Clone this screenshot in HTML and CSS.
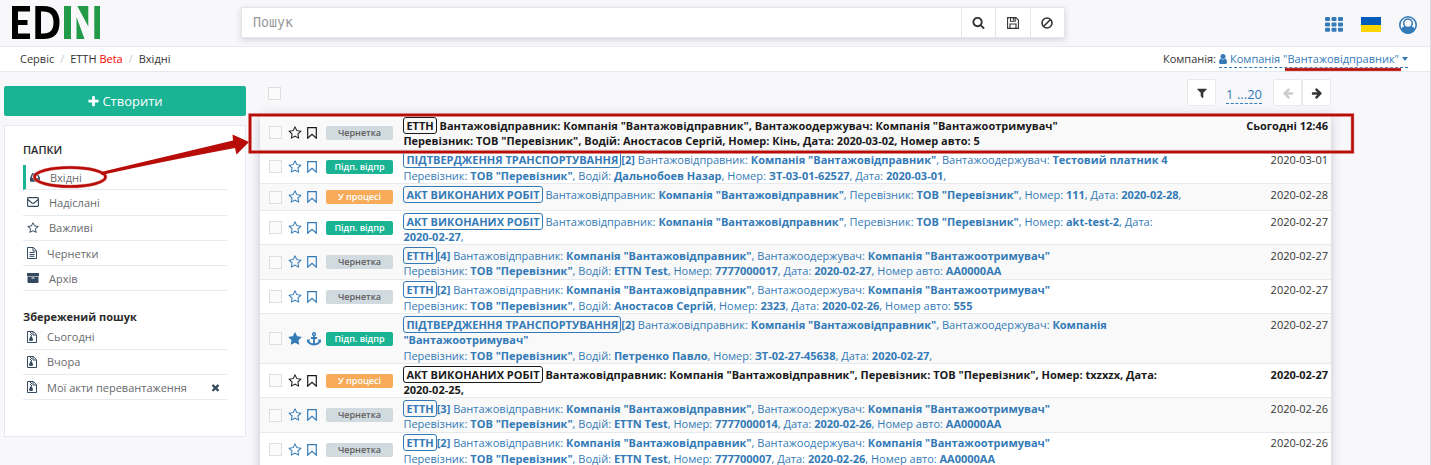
FILE: index.html
```html
<!DOCTYPE html>
<html lang="uk">
<head>
<meta charset="utf-8">
<title>EDIN</title>
<link rel="stylesheet" href="styles.css">
</head>
<body>
<svg class="defs" aria-hidden="true">
  <symbol id="search" viewBox="0 0 1792 1792"><path d="M1216 832q0-185-131.5-316.5t-316.5-131.5-316.5 131.5-131.5 316.5 131.5 316.5 316.5 131.5 316.5-131.5 131.5-316.5zm512 832q0 52-38 90t-90 38q-54 0-90-38l-343-342q-179 124-399 124-143 0-273.5-55.5t-225-150-150-225-55.5-273.5 55.5-273.5 150-225 225-150 273.5-55.5 273.5 55.5 225 150 150 225 55.5 273.5q0 220-124 399l343 343q37 37 37 90z"/></symbol>
  <symbol id="plus" viewBox="0 0 1792 1792"><path d="M1600 736v192q0 40-28 68t-68 28h-416v416q0 40-28 68t-68 28h-192q-40 0-68-28t-28-68v-416h-416q-40 0-68-28t-28-68v-192q0-40 28-68t68-28h416v-416q0-40 28-68t68-28h192q40 0 68 28t28 68v416h416q40 0 68 28t28 68z"/></symbol>
  <symbol id="filter" viewBox="0 0 1792 1792"><path d="M1595 295q17 41-14 70l-493 493v742q0 42-39 59-13 5-25 5-27 0-45-19l-256-256q-19-19-19-45v-486l-493-493q-31-29-14-70 17-39 59-39h1280q42 0 59 39z"/></symbol>
  <symbol id="star" viewBox="0 0 1792 1792"><path d="M1728 647q0 22-26 48l-363 354 86 500q1 7 1 20 0 21-10.500 35.500t-30.500 14.500q-19 0-40-12l-449-236-449 236q-22 12-40 12-21 0-31.500-14.500t-10.500-35.500q0-6 2-20l86-500-364-354q-25-27-25-48 0-37 56-46l502-73 225-455q19-41 49-41t49 41l225 455 502 73q56 9 56 46z"/></symbol>
  <symbol id="star-o" viewBox="0 0 1792 1792"><path d="M1201 1004l306-297-422-62-189-382-189 382-422 62 306 297-73 421 378-199 377 199zm527-357q0 22-26 48l-363 354 86 500q1 7 1 20 0 50-41 50-19 0-40-12l-449-236-449 236q-22 12-40 12-21 0-31.500-14.500t-10.500-35.500q0-6 2-20l86-500-364-354q-25-27-25-48 0-37 56-46l502-73 225-455q19-41 49-41t49 41l225 455 502 73q56 9 56 46z"/></symbol>
  <symbol id="times" viewBox="0 0 1792 1792"><path d="M1490 1322q0 40-28 68l-136 136q-28 28-68 28t-68-28l-294-294-294 294q-28 28-68 28t-68-28l-136-136q-28-28-28-68t28-68l294-294-294-294q-28-28-28-68t28-68l136-136q28-28 68-28t68 28l294 294 294-294q28-28 68-28t68 28l136 136q28 28 28 68t-28 68l-294 294 294 294q28 28 28 68z"/></symbol>
  <symbol id="arrow" viewBox="0 0 1792 1792"><path d="M1600 960q0 54-37 91l-651 651q-39 37-91 37-51 0-90-37l-75-75q-38-38-38-91t38-91l293-293h-704q-52 0-84.500-37.500t-32.500-90.500v-128q0-53 32.500-90.500t84.500-37.500h704l-293-294q-38-36-38-90t38-90l75-75q38-38 90-38 53 0 91 38l651 651q37 35 37 90z"/></symbol>
  <symbol id="bookmark" viewBox="0 0 10 12"><path d="M.7.600h8.600v10.600L5 7.400.7 11.200z" fill="none" stroke="currentColor" stroke-width="1.200"/></symbol>
  <symbol id="anchor" viewBox="0 0 14 14"><path d="M7 3.500v9M4 6h6M1.200 8.500Q2 12.300 7 12.500 12 12.300 12.800 8.500" fill="none" stroke="currentColor" stroke-width="1.800"/><circle cx="7" cy="2.200" r="1.400" fill="none" stroke="currentColor" stroke-width="1.400"/><path d="M0 7.500h3.300L.2 11zM14 7.500h-3.300l3.100 3.500z"/></symbol>
  <symbol id="save" viewBox="0 0 12 12"><path d="M.6.600h8.300l2.500 2.500v8.300H.600zM3 11V7h6v4M3.500.8v3.400h4.700V.8M6.500 1v2.300" fill="none" stroke="currentColor" stroke-width="1.100"/></symbol>
  <symbol id="ban" viewBox="0 0 12 12"><g fill="none" stroke="currentColor" stroke-width="1.600"><circle cx="6" cy="6" r="5"/><path d="M9.500 2.500l-7 7"/></g></symbol>
  <symbol id="grid" viewBox="0 0 18 15"><path d="M0 1q0-1 1-1h3q1 0 1 1v2q0 1-1 1H1Q0 4 0 3zm6.500 0q0-1 1-1h3q1 0 1 1v2q0 1-1 1h-3q-1 0-1-1zm6.500 0q0-1 1-1h3q1 0 1 1v2q0 1-1 1h-3q-1 0-1-1zM0 6.400q0-1 1-1h3q1 0 1 1v2q0 1-1 1H1q-1 0-1-1zm6.500 0q0-1 1-1h3q1 0 1 1v2q0 1-1 1h-3q-1 0-1-1zm6.500 0q0-1 1-1h3q1 0 1 1v2q0 1-1 1h-3q-1 0-1-1zM0 11.800q0-1 1-1h3q1 0 1 1v2q0 1-1 1H1q-1 0-1-1zm6.500 0q0-1 1-1h3q1 0 1 1v2q0 1-1 1h-3q-1 0-1-1zm6.500 0q0-1 1-1h3q1 0 1 1v2q0 1-1 1h-3q-1 0-1-1z"/></symbol>
  <symbol id="account" viewBox="0 0 18 18"><circle cx="9" cy="9" r="8.200" fill="none" stroke="currentColor" stroke-width="1.600"/><path d="M1.800 13.500Q3 10.800 5.800 10.300 7.200 11.600 9 11.600t3.200-1.300q2.800.5 4 3.200Q13.500 17.700 9 17.700t-7.200-4.200z"/><circle cx="9" cy="7.300" r="5"/><circle cx="9" cy="7.300" r="3.500" fill="#f8f8fb"/></symbol>
  <symbol id="user" viewBox="0 0 8 10"><circle cx="4" cy="2.600" r="2.500"/><path d="M1.700 4.500Q4 6.500 6.300 4.500 8 5 8 8.300 8 10 6.500 10h-5Q0 10 0 8.300 0 5 1.700 4.500z"/></symbol>
  <symbol id="inbox" viewBox="0 0 12 10"><path d="M2.500 0h7L12 5.500V9q0 1-1 1H1Q0 10 0 9V5.500zM3.600 1.500L2 5.500h2l.8 1.500h2.400L8 5.500h2L8.400 1.500z" fill-rule="evenodd"/></symbol>
  <symbol id="mail" viewBox="0 0 12 10"><path d="M.6 1.500q0-.9.9-.9h9q.9 0 .9.900v7q0 .9-.9.900h-9q-.9 0-.9-.9zM.8 2.500L5 6q1 .7 2 0l4.200-3.500" fill="none" stroke="currentColor" stroke-width="1.100"/></symbol>
  <symbol id="file" viewBox="0 0 10 12"><path d="M.5.500h5.800l3.200 3.200v7.800h-9zM6 .8V4h3.300M2.500 5.500h5M2.500 7.500h5M2.500 9.300h5" fill="none" stroke="currentColor"/></symbol>
  <symbol id="archive" viewBox="0 0 12 10"><path d="M.5 0h11q.5 0 .5.500v2q0 .5-.5.500H.5Q0 3 0 2.500v-2Q0 0 .5 0zM.5 3.600h11v5.600q0 .8-.8.800H1.300q-.8 0-.8-.8zM4.500 4.500v.9h3v-.9z" fill-rule="evenodd"/></symbol>
  <symbol id="zip" viewBox="0 0 10 12"><path d="M.5.500h5.800l3.200 3.200v7.800h-9zM6 .8V4h3.300" fill="none" stroke="currentColor"/><path d="M3 1h1v1H3zM4 2h1v1H4zM3 3h1v1H3zM4 4h1v1H4zM3.300 5.200h1.500l1.300 3.600Q6.100 10 4 10T2 8.800z"/></symbol>
</svg>

<header class="top">
  <svg class="logo" viewBox="0 0 88 33" role="img" aria-label="EDIN"><path d="M0 0h18v5.500H6V14h9.500v5H6v8.500h12V33H0zM23.300 0h8.200q16 0 16 16.500T31.500 33h-8.200zM29 5.500v22h2.500q10 0 10-11t-10-11z" fill-rule="evenodd"/><path class="green" d="M52 0h7v33h-7zM64.500 11L72.500 33h-8zM65.300 0h11v20.500zM82.300 0h5.700v33h-5.700z"/></svg>
  <div class="searchbar">
    <span class="query">Пошук</span>
    <span class="sbtn"><svg width="13" height="13"><use href="#search"/></svg></span>
    <span class="sbtn"><svg width="12" height="12"><use href="#save"/></svg></span>
    <span class="sbtn"><svg width="12" height="12"><use href="#ban"/></svg></span>
  </div>
  <div class="tools">
    <svg width="18" height="15"><use href="#grid"/></svg>
    <span class="flag"></span>
    <svg width="18" height="18"><use href="#account"/></svg>
  </div>
</header>

<nav class="crumbs">
  <div class="path"><span>Сервіс</span><i>/</i><span>ЕТТН <em>Beta</em></span><i>/</i><span>Вхідні</span></div>
  <div class="company">Компанія: <span class="pick"><svg width="8" height="10"><use href="#user"/></svg> Компанія "Вантажовідправник" <b class="caret"></b></span></div>
</nav>

<div class="body">
  <aside class="side">
    <div class="create"><svg width="13" height="13"><use href="#plus"/></svg>Створити</div>
    <div class="panel">
      <h5 class="light">ПАПКИ</h5>
      <ul>
        <li class="active"><svg width="10" height="9"><use href="#inbox"/></svg><span>Вхідні</span></li>
        <li><svg width="12" height="10"><use href="#mail"/></svg><span>Надіслані</span></li>
        <li><svg width="12" height="12"><use href="#star-o"/></svg><span>Важливі</span></li>
        <li><svg width="10" height="12"><use href="#file"/></svg><span>Чернетки</span></li>
        <li><svg width="12" height="10"><use href="#archive"/></svg><span>Архів</span></li>
      </ul>
      <h5 class="saved">Збережений пошук</h5>
      <ul>
        <li><svg width="10" height="12"><use href="#zip"/></svg><span>Сьогодні</span></li>
        <li><svg width="10" height="12"><use href="#zip"/></svg><span>Вчора</span></li>
        <li><svg width="10" height="12"><use href="#zip"/></svg><span>Мої акти перевантаження</span><svg class="remove" width="11" height="11"><use href="#times"/></svg></li>
      </ul>
    </div>
  </aside>

  <main class="main">
    <div class="bar">
      <span class="check"></span>
      <span class="btn filter"><svg width="12" height="12"><use href="#filter"/></svg></span>
      <span class="range">1 ...20</span>
      <span class="pager"><span class="btn off"><svg class="flip" width="12" height="12"><use href="#arrow"/></svg></span><span class="btn"><svg width="12" height="12"><use href="#arrow"/></svg></span></span>
    </div>
    <div class="list">
      <div class="row h34 unread raised">
        <span class="check"></span><svg class="st"><use href="#star-o"/></svg><svg class="bm"><use href="#bookmark"/></svg><span class="badge gray">Чернетка</span>
        <div class="text"><p><u>ЕТТН</u> Вантажовідправник: Компанія "Вантажовідправник", Вантажоодержувач: Компанія "Вантажоотримувач"</p><p>Перевізник: ТОВ "Перевізник", Водій: Аностасов Сергій, Номер: Кінь, Дата: 2020-03-02, Номер авто: 5</p></div><time>Сьогодні 12:46</time>
      </div>
      <div class="row h34 raised loose">
        <span class="check"></span><svg class="st"><use href="#star-o"/></svg><svg class="bm"><use href="#bookmark"/></svg><span class="badge teal">Підп. відпр</span>
        <div class="text"><p><u>ПІДТВЕРДЖЕННЯ ТРАНСПОРТУВАННЯ</u><b>[2]</b> Вантажовідправник: <b>Компанія "Вантажовідправник"</b>, Вантажоодержувач: <b>Тестовий платник 4</b></p><p>Перевізник: <b>ТОВ "Перевізник"</b>, Водій: <b>Дальнобоев Назар</b>, Номер: <b>ЗТ-03-01-62527</b>, Дата: <b>2020-03-01</b>,</p></div><time>2020-03-01</time>
      </div>
      <div class="row h27">
        <span class="check"></span><svg class="st"><use href="#star-o"/></svg><svg class="bm"><use href="#bookmark"/></svg><span class="badge orange">У процесі</span>
        <div class="text"><p><u>АКТ ВИКОНАНИХ РОБІТ</u> Вантажовідправник: <b>Компанія "Вантажовідправник"</b>, Перевізник: <b>ТОВ "Перевізник"</b>, Номер: <b>111</b>, Дата: <b>2020-02-28</b>,</p></div><time>2020-02-28</time>
      </div>
      <div class="row h34">
        <span class="check"></span><svg class="st"><use href="#star-o"/></svg><svg class="bm"><use href="#bookmark"/></svg><span class="badge teal">Підп. відпр</span>
        <div class="text"><p><u>АКТ ВИКОНАНИХ РОБІТ</u> Вантажовідправник: <b>Компанія "Вантажовідправник"</b>, Перевізник: <b>ТОВ "Перевізник"</b>, Номер: <b>akt-test-2</b>, Дата:</p><p><b>2020-02-27</b>,</p></div><time>2020-02-27</time>
      </div>
      <div class="row h35">
        <span class="check"></span><svg class="st"><use href="#star-o"/></svg><svg class="bm"><use href="#bookmark"/></svg><span class="badge gray">Чернетка</span>
        <div class="text"><p><u>ЕТТН</u><b>[4]</b> Вантажовідправник: <b>Компанія "Вантажовідправник"</b>, Вантажоодержувач: <b>Компанія "Вантажоотримувач"</b></p><p>Перевізник: <b>ТОВ "Перевізник"</b>, Водій: <b>ETTN Test</b>, Номер: <b>7777000017</b>, Дата: <b>2020-02-27</b>, Номер авто: <b>АА0000АА</b></p></div><time>2020-02-27</time>
      </div>
      <div class="row h34 raised loose">
        <span class="check"></span><svg class="st"><use href="#star-o"/></svg><svg class="bm"><use href="#bookmark"/></svg><span class="badge gray">Чернетка</span>
        <div class="text"><p><u>ЕТТН</u><b>[2]</b> Вантажовідправник: <b>Компанія "Вантажовідправник"</b>, Вантажоодержувач: <b>Компанія "Вантажоотримувач"</b></p><p>Перевізник: <b>ТОВ "Перевізник"</b>, Водій: <b>Аностасов Сергій</b>, Номер: <b>2323</b>, Дата: <b>2020-02-26</b>, Номер авто: <b>555</b></p></div><time>2020-02-27</time>
      </div>
      <div class="row h50 loose">
        <span class="check"></span><svg class="st"><use href="#star"/></svg><svg class="an"><use href="#anchor"/></svg><span class="badge teal">Підп. відпр</span>
        <div class="text"><p><u>ПІДТВЕРДЖЕННЯ ТРАНСПОРТУВАННЯ</u><b>[2]</b> Вантажовідправник: <b>Компанія "Вантажовідправник"</b>, Вантажоодержувач: <b>Компанія</b></p><p><b>"Вантажоотримувач"</b></p><p>Перевізник: <b>ТОВ "Перевізник"</b>, Водій: <b>Петренко Павло</b>, Номер: <b>ЗТ-02-27-45638</b>, Дата: <b>2020-02-27</b>,</p></div><time>2020-02-27</time>
      </div>
      <div class="row h34 unread">
        <span class="check"></span><svg class="st"><use href="#star-o"/></svg><svg class="bm"><use href="#bookmark"/></svg><span class="badge orange">У процесі</span>
        <div class="text"><p><u>АКТ ВИКОНАНИХ РОБІТ</u> Вантажовідправник: Компанія "Вантажовідправник", Перевізник: ТОВ "Перевізник", Номер: txzxzx, Дата:</p><p>2020-02-25,</p></div><time>2020-02-27</time>
      </div>
      <div class="row h35">
        <span class="check"></span><svg class="st"><use href="#star-o"/></svg><svg class="bm"><use href="#bookmark"/></svg><span class="badge gray">Чернетка</span>
        <div class="text"><p><u>ЕТТН</u><b>[3]</b> Вантажовідправник: <b>Компанія "Вантажовідправник"</b>, Вантажоодержувач: <b>Компанія "Вантажоотримувач"</b></p><p>Перевізник: <b>ТОВ "Перевізник"</b>, Водій: <b>ETTN Test</b>, Номер: <b>7777000014</b>, Дата: <b>2020-02-26</b>, Номер авто: <b>АА0000АА</b></p></div><time>2020-02-26</time>
      </div>
      <div class="row h34 raised loose">
        <span class="check"></span><svg class="st"><use href="#star-o"/></svg><svg class="bm"><use href="#bookmark"/></svg><span class="badge gray">Чернетка</span>
        <div class="text"><p><u>ЕТТН</u><b>[2]</b> Вантажовідправник: <b>Компанія "Вантажовідправник"</b>, Вантажоодержувач: <b>Компанія "Вантажоотримувач"</b></p><p>Перевізник: <b>ТОВ "Перевізник"</b>, Водій: <b>ETTN Test</b>, Номер: <b>777700007</b>, Дата: <b>2020-02-26</b>, Номер авто: <b>АА0000АА</b></p></div><time>2020-02-26</time>
      </div>
    </div>
  </main>
</div>

<svg class="marks" viewBox="0 0 1431 465" aria-hidden="true">
  <g class="halo"><rect x="250" y="115" width="1102.500" height="37"/><ellipse cx="70" cy="177" rx="35.500" ry="9.500"/><path d="M1285 69.500h116"/></g>
  <g class="red"><rect x="250" y="115" width="1102.500" height="37"/><ellipse cx="70" cy="177" rx="35.500" ry="9.500"/><path d="M1285 69.500h116"/></g>
  <path class="head" d="M101 172L233 140.500l-.5-6L249 142l-12.500 12.500-1.500-6.500Q160 162 101.500 175z"/>
</svg>
</body>
</html>
```
FILE: styles.css
```css
* { box-sizing: border-box; }
body {
  margin: 0;
  width: 1431px;
  height: 465px;
  overflow: hidden;
  position: relative;
  border-right: 1px solid #dcdde0;
  background: #f8f8fb;
  font: 11px/15px "Open Sans", "Noto Sans", sans-serif;
  color: #333;
}
.defs { position: absolute; width: 0; height: 0; }
svg { fill: currentColor; flex: none; }
p, h5, ul { margin: 0; padding: 0; }

.top {
  display: flex;
  height: 47px;
  padding-left: 12px;
  border-bottom: 1px solid #e7eaec;
}
.logo { width: 88px; height: 33px; margin-top: 6px; fill: #000; }
.green { fill: #229a47; }
.searchbar {
  display: flex;
  width: 824px;
  height: 31px;
  margin: 7px 0 0 141px;
  border: 1px solid #e5e6e7;
  background: #fff;
  box-shadow: 0 2px 6px rgba(60, 60, 100, .2);
}
.query {
  width: 719px;
  padding-left: 11px;
  font: 13.300px/29px "DejaVu Sans Mono", monospace;
  color: #999;
}
.sbtn {
  display: flex;
  flex: 1;
  align-items: center;
  justify-content: center;
  border-left: 1px solid #e5e6e7;
}
.tools {
  display: flex;
  align-items: center;
  height: 49px;
  margin-left: auto;
  padding-right: 13px;
  gap: 18px;
  color: #337ab7;
}
.flag {
  width: 20px;
  height: 15px;
  background: linear-gradient(#005bbb 50%, #ffd500 50%);
}

.crumbs {
  display: flex;
  justify-content: space-between;
  height: 25px;
  padding: 0 22px 0 20px;
  border-bottom: 1px solid #e7eaec;
  background: #fff;
  font-size: 11px;
  line-height: 24px;
}
.path { display: flex; }
.path i { width: 16px; text-align: center; color: #ccc; font-style: normal; }
.path em { color: #f00; font-style: normal; }
.company { display: flex; gap: 3px; align-items: center; }
.pick {
  display: flex;
  align-items: center;
  gap: 3px;
  height: 17px;
  border-bottom: 1px dashed #337ab7;
  color: #337ab7;
}
.caret {
  border: 3px solid transparent;
  border-top: 4px solid #337ab7;
  border-bottom: 0;
}

.body { display: flex; padding-left: 4px; }
.side { width: 242px; padding-top: 14px; }
.create {
  display: flex;
  align-items: center;
  justify-content: center;
  gap: 2px;
  height: 30px;
  border-radius: 2px;
  background: #1ab394;
  color: #fff;
  font-size: 13px;
}
.panel {
  height: 312px;
  margin-top: 9px;
  padding: 15px 18px;
  border: 1px solid #e7e7f5;
  background: #fff;
}
h5 { font-size: 11px; line-height: 17px; font-weight: 700; color: #2b2b2b; }
.light { font-weight: 600; margin-bottom: 7px; }
.saved { margin: 17px 0 -1px; }
li {
  display: flex;
  align-items: center;
  height: 25.300px;
  padding-left: 4px;
  border-bottom: 1px solid #e7eaec;
  font-size: 11px;
  list-style: none;
  color: #676a6c;
}
li span { margin-left: 10px; }
li svg { color: #34495e; }
.active { border-left: 3px solid #1ab394; }
.remove { margin-left: auto; margin-right: 6px; }

.main { width: 1071px; margin-left: 14px; }
.bar { display: flex; height: 44px; padding: 7px 0 0 8px; }
.check {
  width: 13px;
  height: 13px;
  border: 1px solid #dedede;
  background: #fbfbfb;
  flex: none;
}
.bar .check { margin-top: 8px; }
.btn {
  display: flex;
  width: 29px;
  height: 27px;
  align-items: center;
  justify-content: center;
  border: 1px solid #e7eaec;
  border-radius: 2px;
  background: #fff;
}
.filter { margin-left: auto; }
.range {
  height: 18px;
  margin: 7px 11px 0 10px;
  padding-top: 1px;
  border-bottom: 1px dashed #337ab7;
  color: #337ab7;
  font-size: 13px;
}
.pager { display: flex; }
.off { color: #ccc; }
.flip { transform: scaleX(-1); }
.list { height: 360px; box-shadow: 0 0 10px rgba(60, 60, 100, .28); }
.row {
  display: flex;
  align-items: center;
  padding-left: 9px;
  padding-right: 3px;
  border-bottom: 1px solid #e7eaec;
  background: #fff;
  color: #337ab7;
}
.row:nth-child(odd) { background: #f9f9f9; }
.h27 { height: 27px; }
.h34 { height: 34px; }
.h35 { height: 35px; }
.h50 { height: 50px; }
.st { width: 14px; height: 14px; margin-left: 6px; }
.bm { width: 10px; height: 12px; margin: 0 9px 0 5px; }
.an { width: 14px; height: 14px; margin: 0 5px; }
.badge {
  width: 67px;
  height: 14px;
  border-radius: 2px;
  font-size: 9px;
  line-height: 14px;
  font-weight: 600;
  text-align: center;
}
.gray { background: #d1dade; color: #5e5e5e; }
.teal { background: #1ab394; color: #fff; }
.orange { background: #f8ac59; color: #fff; }
.text { align-self: flex-start; margin-left: 10.400px; padding-top: 3px; white-space: nowrap; }
.text u {
  display: inline-block;
  height: 17px;
  margin: -1px 0;
  padding: 0 2px;
  border: 1px solid;
  border-radius: 3px;
  font-weight: 700;
  text-decoration: none;
}
.text p { height: 15px; }
.loose p:last-child { margin-top: 1px; }
time { align-self: flex-start; margin-left: auto; padding-top: 3px; color: #333; }
.raised .text, .raised time { padding-top: 2px; }
.unread { color: #1a1a1a; font-weight: 700; }
.unread time { color: #1a1a1a; }

/* Annotation layer over the page */
.marks { position: absolute; left: 0; top: 0; width: 1431px; height: 465px; fill: none; }
.halo { stroke: #e29a98; stroke-width: 3.600; }
.red { stroke: #b80c09; stroke-width: 2.500; }
.head { fill: #b80c09; }
```
